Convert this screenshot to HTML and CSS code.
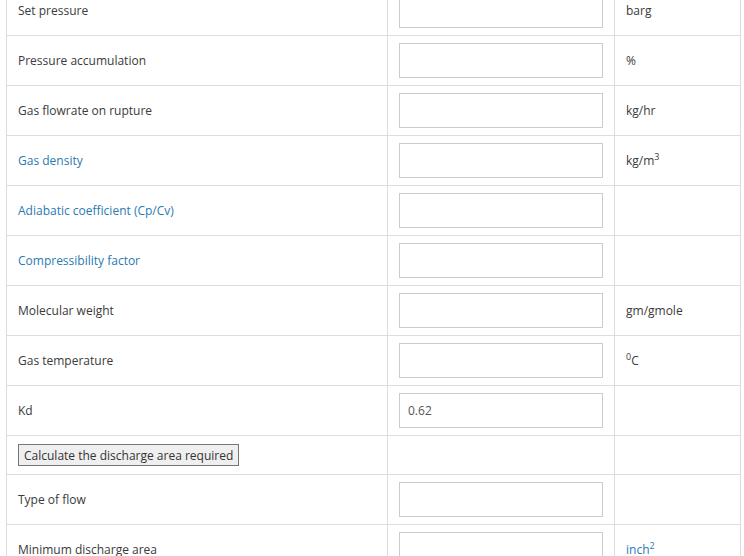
FILE: index.html
```html
<!DOCTYPE html>
<html>
<head>
<meta charset="utf-8">
<link rel="stylesheet" href="styles.css">
</head>
<body>
<table class="calc">
  <colgroup>
    <col class="c-label">
    <col class="c-input">
    <col class="c-unit">
  </colgroup>
  <tr><td>Set pressure</td><td><input class="field" type="text"></td><td>barg</td></tr>
  <tr><td>Pressure accumulation</td><td><input class="field" type="text"></td><td>%</td></tr>
  <tr><td>Gas flowrate on rupture</td><td><input class="field" type="text"></td><td>kg/hr</td></tr>
  <tr><td><a class="link" href="#">Gas density</a></td><td><input class="field" type="text"></td><td>kg/m<sup>3</sup></td></tr>
  <tr><td><a class="link" href="#">Adiabatic coefficient (Cp/Cv)</a></td><td><input class="field" type="text"></td><td></td></tr>
  <tr><td><a class="link" href="#">Compressibility factor</a></td><td><input class="field" type="text"></td><td></td></tr>
  <tr><td>Molecular weight</td><td><input class="field" type="text"></td><td>gm/gmole</td></tr>
  <tr><td>Gas temperature</td><td><input class="field" type="text"></td><td><sup>0</sup>C</td></tr>
  <tr><td>Kd</td><td><input class="field" type="text" value="0.62"></td><td></td></tr>
  <tr class="btn-row"><td><button class="calc-btn" type="button">Calculate the discharge area required</button></td><td></td><td></td></tr>
  <tr><td>Type of flow</td><td><input class="field" type="text"></td><td></td></tr>
  <tr><td>Minimum discharge area</td><td><input class="field" type="text"></td><td><a class="link" href="#">inch<sup>2</sup></a></td></tr>
</table>
</body>
</html>
```
FILE: styles.css
```css
html, body {
  margin: 0;
  padding: 0;
  background: #ffffff;
}
body {
  font-family: "Open Sans", "Liberation Sans", sans-serif;
  font-size: 12px;
  color: #3a3a3a;
  overflow: hidden;
}
.calc {
  border-collapse: collapse;
  table-layout: fixed;
  width: 734px;
  margin: -15px 0 0 6px;
}
.c-label { width: 381px; }
.c-input { width: 227px; }
.c-unit { width: 126px; }
.calc td {
  border: 1px solid #dddddd;
  padding: 7px 11px;
  height: 35px;
  vertical-align: middle;
  line-height: 17px;
}
.calc .btn-row td {
  padding: 8px 11px;
  height: 22px;
}
.field {
  box-sizing: border-box;
  display: block;
  width: 204px;
  height: 35px;
  margin: 0;
  padding: 0 8px;
  border: 1px solid #cccccc;
  font-family: "Open Sans", "Liberation Sans", sans-serif;
  font-size: 12px;
  color: #555555;
  background: #ffffff;
  outline: none;
}
.link {
  color: #2a7ab3;
  text-decoration: none;
}
sup {
  font-size: 9px;
  line-height: 0;
  vertical-align: 5px;
}
.calc-btn {
  box-sizing: border-box;
  display: block;
  height: 22px;
  margin: 0;
  padding: 0 5px;
  border: 1px solid #767676;
  border-radius: 0;
  background: #efefef;
  font-family: "Open Sans", "Liberation Sans", sans-serif;
  font-size: 12px;
  color: #333333;
}
```
